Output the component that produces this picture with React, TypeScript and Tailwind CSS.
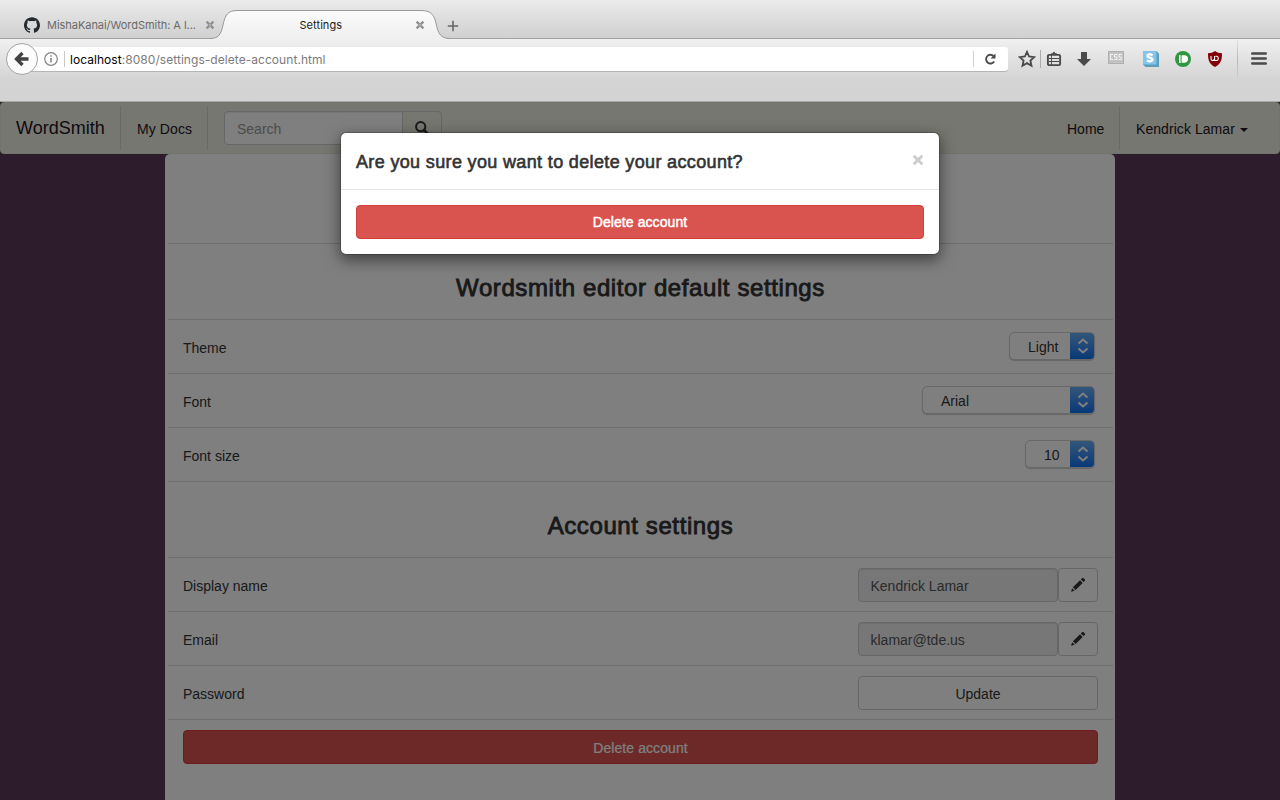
import React from "react";
import { SiGithub } from "react-icons/si";

function TabClose() {
  return (
    <svg width="10" height="10" viewBox="0 0 10 10" className="shrink-0">
      <path d="M1.6 1.6L8.4 8.4M8.4 1.6L1.6 8.4" stroke="#8f8f8f" strokeWidth="2.3" />
      <path d="M5 3.6V6.4M3.6 5H6.4" stroke="#b4b4b4" strokeWidth="1" />
    </svg>
  );
}

function TabStrip() {
  return (
    <div className="flex h-[39px] items-start border-b border-[#a2a2a2] bg-linear-to-b from-[#ebebeb] to-[#d0d0d0] font-[Inter,sans-serif] text-[11px]">
      <div className="flex h-[38px] w-[224px] items-center pt-3 pl-6">
        <SiGithub className="size-4 shrink-0 text-[#24292e]" />
        <span className="ml-[7px] w-[158px] whitespace-nowrap text-[#6a6a6a] tracking-[-0.04px]">MishaKanai/WordSmith: A l...</span>
        <TabClose />
      </div>
      <div className="relative flex h-[38px] w-[212px] items-center pt-3">
        <svg className="absolute top-0 -left-[14px]" width="242" height="39" viewBox="0 0 242 39">
          <defs>
            <linearGradient id="tab" x1="0" y1="0" x2="0" y2="1">
              <stop offset="0" stopColor="#fbfbfb" />
              <stop offset="1" stopColor="#efefef" />
            </linearGradient>
          </defs>
          <path d="M0 39V38.5C8 38.5 11 35 13 25C15 15 18 10.500 27 10.500H211C220 10.500 224 14 226 23C228 34 231 38.500 240 38.500V39Z" fill="url(#tab)" />
          <path d="M0 38.500C8 38.500 11 35 13 25C15 15 18 10.500 27 10.500H211C220 10.500 224 14 226 23C228 34 231 38.500 240 38.500" fill="none" stroke="#999" />
        </svg>
        <span className="relative ml-[75.500px] w-[115.500px] text-[#1c1c1c] tracking-[0.06px]">Settings</span>
        <span className="relative flex"><TabClose /></span>
      </div>
      <svg className="mt-5 ml-[11px]" width="12" height="12" viewBox="0 0 12 12">
        <path d="M6 .8V11.200M.8 6H11.200" stroke="#666" strokeWidth="1.600" />
      </svg>
    </div>
  );
}

function Slot({ className = "", children }: { className?: string; children: React.ReactNode }) {
  return <div className={"flex h-[22px] w-[22px] shrink-0 items-center justify-center " + className}>{children}</div>;
}

function Toolbar() {
  return (
    <div className="h-[63px] border-b border-[#a8a8a8] bg-linear-to-b from-[#f0f0f0] from-0% via-[#d4d4d4] via-65% to-[#d3d3d3]">
      <div className="flex h-[40px] items-center pl-[6px] font-[Inter,sans-serif]">
        <div className="relative z-10 flex size-8 shrink-0 items-center justify-center rounded-full border border-[#a3a3a3] bg-[#fbfbfb]">
          <svg width="16" height="16" viewBox="0 0 16 16">
            <path d="M8.500 2L2.500 8L8.500 14M2.500 8H14.500" fill="none" stroke="#424242" strokeWidth="3.300" />
          </svg>
        </div>
        <div className="-ml-4 flex h-[24px] w-[986px] items-center rounded-r-[3px] bg-white pl-[22px] shadow-[0_1px_0_#b5b5b5]">
          <svg width="14" height="14" viewBox="0 0 14 14">
            <circle cx="7" cy="7" r="6.300" fill="none" stroke="#858585" strokeWidth="1.200" />
            <path d="M7 6V10.500M7 3.300V4.800" stroke="#858585" strokeWidth="1.600" />
          </svg>
          <span className="ml-[6px] h-4 w-px bg-[#c8c8c8]" />
          <span className="ml-[5px] pt-[2px] text-[12px] text-[#7b7b7b] tracking-[0.05px]"><span className="text-black">localhost</span>:8080/settings-delete-account.html</span>
          <span className="mr-[10px] ml-auto h-4 w-px bg-[#d0d0d0]" />
          <svg className="mr-[11px]" width="13" height="14" viewBox="0 0 13 14">
            <path d="M9.600 4A4.400 4.400 0 1 0 10.200 9.500" fill="none" stroke="#4a4a4a" strokeWidth="1.900" />
            <path d="M11.500 1.500V6.500H6.500Z" fill="#4a4a4a" />
          </svg>
        </div>
        <Slot className="ml-2">
          <svg width="18" height="18" viewBox="0 0 18 18">
            <path d="M9 1.800L11.100 6.500L16.200 7.100L12.400 10.500L13.500 15.700L9 13.100L4.500 15.700L5.600 10.500L1.800 7.100L6.900 6.500Z" fill="none" stroke="#4a4a4a" strokeWidth="1.800" />
          </svg>
        </Slot>
        <span className="ml-[2px] h-[18px] w-px bg-[#ababab]" />
        <Slot className="ml-[2px]">
          <svg width="16" height="16" viewBox="0 0 16 16">
            <rect x="1.900" y="3.900" width="12.200" height="10.200" rx="1.200" fill="none" stroke="#4a4a4a" strokeWidth="1.900" />
            <path d="M4.500 3.500L5.500 2.300H6.500L8 .5L9.500 2.300H10.500L11.500 3.500Z" fill="#4a4a4a" />
            <path d="M3 7.500H13M3 10.500H13" stroke="#4a4a4a" strokeWidth="1" />
            <path d="M5.500 4V14" stroke="#4a4a4a" strokeWidth=".9" />
          </svg>
        </Slot>
        <Slot className="ml-2">
          <svg width="16" height="16" viewBox="0 0 16 16">
            <path d="M5 1.500Q5 1 5.500 1H10.500Q11 1 11 1.500V8H15L8 15L1 8H5Z" fill="#4a4a4a" />
          </svg>
        </Slot>
        <Slot className="ml-[10px] pb-[3px]">
          <svg width="16" height="13" viewBox="0 0 16 13">
            <rect x=".5" y=".5" width="15" height="12" fill="#c2c2c2" stroke="#b0b0b0" />
            <path d="M5 3.500H2.500V8.500H5M9.500 3.500H6.500V6H9V8.500H6.200M13.800 3.500H11V6H13.300V8.500H10.600" fill="none" stroke="#f5f5f5" strokeWidth="1" />
          </svg>
        </Slot>
        <Slot className="ml-[13px]">
          <svg width="16" height="16" viewBox="0 0 16 16">
            <path d="M0 0H13.500L16 2.500V16H2.500L0 13.500Z" fill="#5b9fbd" />
            <rect width="13.500" height="13.500" fill="#82c4ea" />
            <path d="M9.600 4.300C8 3 4.500 3.100 4.500 5C4.500 7.200 9.500 6.200 9.500 8.600C9.500 10.700 5.800 10.700 4 9.300" fill="none" stroke="#fff" strokeWidth="2.300" />
          </svg>
        </Slot>
        <Slot className="ml-[10px]">
          <svg width="16" height="16" viewBox="0 0 16 16">
            <circle cx="8" cy="8" r="8" fill="#30963f" />
            <path d="M4.800 4.200V12" stroke="#fff" strokeWidth="1.600" />
            <path d="M7.300 4.900H9.300A3.100 3.100 0 0 1 9.300 11.100H7.300Z" fill="#fff" stroke="#fff" strokeWidth="1.400" />
          </svg>
        </Slot>
        <Slot className="ml-[10px]">
          <svg width="16" height="16" viewBox="0 0 16 16">
            <path d="M8 0C10 1.800 12.500 2.200 15 2.200C15 8 14.500 12.500 8 16C1.500 12.500 1 8 1 2.200C3.500 2.200 6 1.800 8 0Z" fill="#850006" />
            <path d="M4 5V8Q4 9.500 5.600 9.500T7.200 8M7.600 5V9.500H9.800A2.200 2.200 0 0 0 9.800 5.300H8.500" fill="none" stroke="#fff" strokeWidth="1.100" />
          </svg>
        </Slot>
        <span className="ml-[11px] h-[38px] w-px bg-linear-to-b from-[#dedede] via-[#b8b8b8] to-[#d0d0d0]" />
        <Slot className="ml-[10px]">
          <svg width="16" height="14" viewBox="0 0 16 14">
            <path d="M1.300 1.500H14.700M1.300 6.500H14.700M1.300 11.500H14.700" stroke="#4a4a4a" strokeWidth="2.600" strokeLinecap="round" />
          </svg>
        </Slot>
      </div>
    </div>
  );
}

function Navbar() {
  return (
    <nav className="flex h-[52px] items-center rounded border border-[#e2e6d8] bg-[#eaefe0] text-[#241423]">
      <a className="w-[105px] pt-px pl-[15px] text-[18px] tracking-[0.02px]">WordSmith</a>
      <span className="ml-[14px] h-[44px] w-px bg-[#d2d4ca]" />
      <a className="w-[86px] pt-[2px] pl-4 tracking-[0.1px]">My Docs</a>
      <span className="h-[44px] w-px bg-[#d2d4ca]" />
      <div className="ml-4 flex h-[34px]">
        <div className="flex w-[179px] items-center rounded-l border border-[#ccc] bg-white pt-[2px] pl-3 text-[#999] shadow-[inset_0_1px_1px_rgba(0,0,0,0.075)]">Search</div>
        <div className="-ml-px flex w-[40px] items-center justify-center rounded-r border border-[#ccc] bg-[#eaefe0]">
          <svg width="14" height="14" viewBox="0 0 14 14" className="mb-px">
            <circle cx="5.700" cy="5.700" r="4.600" fill="none" stroke="#333" strokeWidth="2" />
            <path d="M9 9L12.600 12.600" stroke="#333" strokeWidth="2.600" strokeLinecap="round" />
          </svg>
        </div>
      </div>
      <a className="ml-auto w-[52px] pt-[2px]">Home</a>
      <span className="h-[44px] w-px bg-[#d2d4ca]" />
      <a className="flex w-[159px] items-center pt-[2px] pl-4 whitespace-nowrap tracking-[0.06px]">
        Kendrick Lamar
        <svg width="8" height="4" viewBox="0 0 8 4" className="mt-[2px] ml-[5px]"><path d="M0 0H8L4 4Z" fill="currentColor" /></svg>
      </a>
    </nav>
  );
}

function Heading({ children }: { children: string }) {
  return (
    <h3 className="flex h-[76px] items-center justify-center border-t border-[#ddd] pt-3 text-[24px] tracking-[0.6px] text-[#333] [-webkit-text-stroke:0.85px_#333]">
      {children}
    </h3>
  );
}

function Row({ label, children }: { label: string; children: React.ReactNode }) {
  return (
    <div className="flex h-[54px] items-center justify-between border-t border-[#ddd] px-[15px] text-[#333]">
      <span className="pt-1">{label}</span>
      {children}
    </div>
  );
}

function Select({ value, className }: { value: string; className: string }) {
  return (
    <div className={"mr-[3px] mb-[2px] flex h-[28px] overflow-hidden rounded-[5px] border border-[#d0d0d0] bg-white shadow-[0_1px_1px_rgba(0,0,0,0.2)] " + className}>
      <span className="flex flex-1 items-center pt-[3px] pl-[18px]">{value}</span>
      <span className="-my-px -mr-px flex w-[25px] items-center justify-center bg-linear-to-b from-[#68aef5] to-[#0070ef]">
        <svg width="12" height="18" viewBox="0 0 12 18">
          <path d="M1.500 6.500L6 2.500L10.500 6.500M1.500 11.500L6 15.500L10.500 11.500" fill="none" stroke="#fff" strokeWidth="2" />
        </svg>
      </span>
    </div>
  );
}

function EditField({ value }: { value: string }) {
  return (
    <div className="flex h-[34px]">
      <div className="flex w-[200px] items-center rounded border border-[#ccc] bg-[#eee] pt-[3px] pl-[11.500px] text-[#555] shadow-[inset_0_1px_1px_rgba(0,0,0,0.075)]">{value}</div>
      <div className="flex w-[40px] items-center justify-center rounded border border-[#ccc] bg-white">
        <svg width="16" height="16" viewBox="0 0 16 16">
          <path d="M1 14.800L2.200 11.200L4.700 13.700ZM2.900 10.300L10 3.200L12.700 5.900L5.600 13ZM10.800 2.400L12.200 1Q12.800.6 13.300 1L14.900 2.600Q15.400 3.200 14.900 3.700L13.500 5.100Z" fill="#333" />
        </svg>
      </div>
    </div>
  );
}

function DeleteButton({ className = "" }: { className?: string }) {
  return (
    <button className={"block h-[34px] w-full rounded border border-[#d43f3a] bg-[#d9534f] text-center tracking-[0.08px] text-white " + className}>
      Delete account
    </button>
  );
}

function SettingsPanel() {
  return (
    <main className="mx-auto flex w-[950px] flex-1 flex-col rounded-t-[5px] bg-white pt-[89px] pr-[2px] pl-[3px]">
      <Heading>Wordsmith editor default settings</Heading>
      <Row label="Theme"><Select value="Light" className="w-[86px]" /></Row>
      <Row label="Font"><Select value="Arial" className="w-[173px]" /></Row>
      <Row label="Font size"><Select value="10" className="w-[70px]" /></Row>
      <Heading>Account settings</Heading>
      <Row label="Display name"><EditField value="Kendrick Lamar" /></Row>
      <Row label="Email"><EditField value="klamar@tde.us" /></Row>
      <Row label="Password">
        <button className="h-[34px] w-[240px] rounded border border-[#ccc] bg-white pt-[3px]">Update</button>
      </Row>
      <div className="border-t border-[#ddd] px-[15px] pt-[10px]"><DeleteButton className="pt-[2px] [-webkit-text-stroke:0.2px_#fff]" /></div>
    </main>
  );
}

function ConfirmDialog() {
  return (
    <div className="absolute inset-0 flex items-start justify-center bg-black/50 pt-[30px]">
      <div className="w-[600px] rounded-[6px] border border-black/20 bg-white bg-clip-padding shadow-[0_5px_15px_rgba(0,0,0,0.5)]">
        <div className="flex h-[57px] items-center justify-between border-b border-[#e5e5e5] px-[15px]">
          <h4 className="pt-[2px] text-[18px] tracking-[0.35px] text-[#333] [-webkit-text-stroke:0.6px_#333]">Are you sure you want to delete your account?</h4>
          <svg width="12" height="12" viewBox="0 0 12 12" className="mb-[3px]">
            <path d="M1.700 1.700L10.300 10.300M10.300 1.700L1.700 10.300" stroke="#ccc" strokeWidth="2.800" />
          </svg>
        </div>
        <div className="p-[15px]"><DeleteButton className="[-webkit-text-stroke:0.45px_#fff]" /></div>
      </div>
    </div>
  );
}

export default function App() {
  return (
    <div className="flex h-[800px] w-[1280px] flex-col overflow-hidden">
      <TabStrip />
      <Toolbar />
      <div className="relative flex flex-1 flex-col bg-[#5a3856] font-['Liberation_Sans',sans-serif] text-[14px]">
        <Navbar />
        <SettingsPanel />
        <ConfirmDialog />
      </div>
    </div>
  );
}
